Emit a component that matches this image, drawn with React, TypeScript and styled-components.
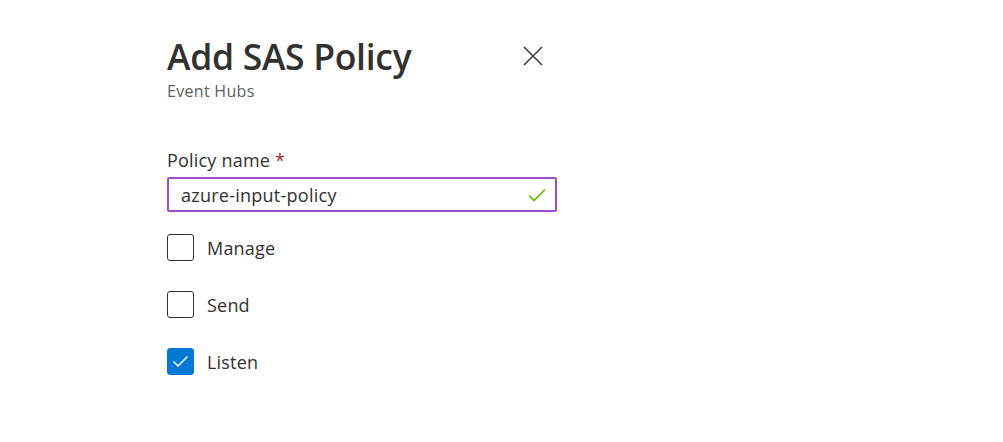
import React from 'react';
import styled, { createGlobalStyle } from 'styled-components';

const GlobalStyle = createGlobalStyle`
  html, body {
    margin: 0;
    padding: 0;
    background: #fff;
  }
  body {
    font-family: "Open Sans", "Noto Sans", sans-serif;
    color: #323130;
  }
`;

const Panel = styled.div`
  display: flex;
  flex-direction: column;
  width: 390px;
  padding: 33px 0 0 167px;
`;

const Header = styled.div`
  display: flex;
  align-items: flex-start;
  justify-content: space-between;
`;

const TitleBlock = styled.div`
  display: flex;
  flex-direction: column;
`;

const Title = styled.h1`
  margin: 0;
  font-size: 35.5px;
  font-weight: 600;
  line-height: 46px;
  letter-spacing: -0.3px;
  color: #323130;
`;

const Subtitle = styled.div`
  margin-top: 1px;
  font-size: 16px;
  line-height: 22px;
  letter-spacing: 0.3px;
  color: #605e5c;
`;

const CloseButton = styled.button`
  display: flex;
  align-items: center;
  justify-content: center;
  width: 32px;
  height: 32px;
  margin: 7px 8px 0 0;
  padding: 0;
  border: none;
  background: none;
  color: #323130;
  cursor: pointer;
`;

const Field = styled.div`
  display: flex;
  flex-direction: column;
  margin-top: 46px;
`;

const Label = styled.label`
  font-size: 18px;
  line-height: 24px;
  letter-spacing: 0.2px;
  color: #323130;
  margin-bottom: 5px;
`;

const Required = styled.span`
  color: #a4262c;
  margin-left: 5px;
`;

const InputBox = styled.div`
  display: flex;
  align-items: center;
  height: 35px;
  flex: 0 0 35px;
  box-sizing: border-box;
  border: 2px solid #9b4fcb;
  border-radius: 2px;
  padding: 0 8px 0 12px;
`;

const Input = styled.input`
  flex: 1;
  border: none;
  outline: none;
  padding: 0;
  font-family: inherit;
  font-size: 18px;
  letter-spacing: 0.25px;
  color: #323130;
  background: transparent;
`;

const Options = styled.div`
  display: flex;
  flex-direction: column;
  gap: 30px;
  margin-top: 22px;
`;

const Option = styled.label`
  display: flex;
  align-items: center;
  gap: 13px;
  font-size: 18px;
  line-height: 26px;
  letter-spacing: 0.2px;
  color: #323130;
  cursor: pointer;
`;

const Box = styled.span<{ $checked: boolean }>`
  display: flex;
  align-items: center;
  justify-content: center;
  width: 27px;
  height: 27px;
  box-sizing: border-box;
  border-radius: 3px;
  border: ${({ $checked }) => ($checked ? '1px solid #0078d4' : '1.5px solid #323130')};
  background: ${({ $checked }) => ($checked ? '#0078d4' : '#fff')};
`;

const permissions = [
  { key: 'manage', label: 'Manage', checked: false },
  { key: 'send', label: 'Send', checked: false },
  { key: 'listen', label: 'Listen', checked: true },
];

export default function App() {
  return (
    <>
      <GlobalStyle />
      <Panel>
        <Header>
          <TitleBlock>
            <Title>Add SAS Policy</Title>
            <Subtitle>Event Hubs</Subtitle>
          </TitleBlock>
          <CloseButton aria-label="Close">
            <svg width="20" height="20" viewBox="0 0 20 20">
              <path d="M1 1 L19 19 M19 1 L1 19" stroke="#323130" strokeWidth="1.4" fill="none" />
            </svg>
          </CloseButton>
        </Header>
        <Field>
          <Label>
            Policy name<Required>*</Required>
          </Label>
          <InputBox>
            <Input defaultValue="azure-input-policy" readOnly />
            <svg width="20" height="16" viewBox="0 0 20 16">
              <path d="M2 8.5 L7 13.5 L18 2.5" stroke="#6bb700" strokeWidth="1.6" fill="none" />
            </svg>
          </InputBox>
        </Field>
        <Options>
          {permissions.map((p) => (
            <Option key={p.key}>
              <Box $checked={p.checked}>
                {p.checked && (
                  <svg width="17" height="13" viewBox="0 0 17 13">
                    <path d="M1.5 6.5 L6 11 L15.5 1.5" stroke="#fff" strokeWidth="1.5" fill="none" />
                  </svg>
                )}
              </Box>
              {p.label}
            </Option>
          ))}
        </Options>
      </Panel>
    </>
  );
}
